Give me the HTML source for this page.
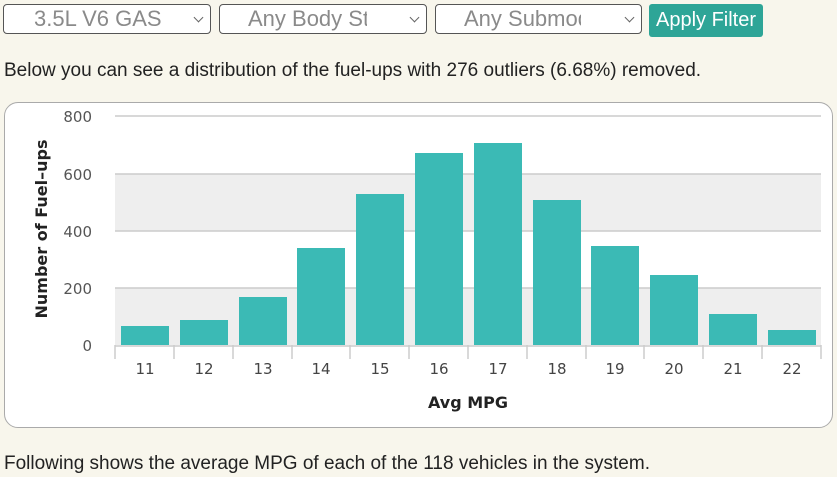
<!DOCTYPE html>
<html><head><meta charset="utf-8"><style>
body{margin:0;background:#f8f6ec;font-family:"Liberation Sans",Arial,sans-serif;width:837px;height:477px;overflow:hidden;position:relative}
.sel{position:absolute;top:4px;height:28px;border:1px solid #555;border-radius:4px;background:#fff;color:#8a8a8a;font-size:22px;line-height:28px;box-sizing:content-box;overflow:hidden}
.sel span{position:absolute;left:28px;top:0;white-space:nowrap}
.sel i{position:absolute;right:8px;top:9px;width:6px;height:6px;border-right:1.5px solid #666;border-bottom:1.5px solid #666;transform:rotate(45deg)}
.btn{position:absolute;left:649px;top:4px;width:114px;height:33px;background:#2ea597;border-radius:3px;color:#fff;font-size:20px;line-height:33px;text-align:center}
p{position:absolute;left:4px;margin:0;font-size:19px;color:#222}
</style></head><body>
<div class="sel" style="left:3px;width:206px"><span style="left:30px">3.5L V6 GAS</span><i></i></div>
<div class="sel" style="left:219px;width:206px"><span>Any Body Sty</span><div style="position:absolute;left:147px;top:0;width:34px;height:28px;background:#fff"></div><i></i></div>
<div class="sel" style="left:435px;width:205px"><span>Any Submode</span><div style="position:absolute;left:145px;top:0;width:34px;height:28px;background:#fff"></div><i></i></div>
<div class="btn">Apply Filter</div>
<p style="top:60px">Below you can see a distribution of the fuel-ups with 276 outliers (6.68%) removed.</p>
<div style="position:absolute;left:4px;top:102px;width:827px;height:324px;border:1px solid #aaa;border-radius:14px;background:#fff"></div>
<svg style="position:absolute;left:0;top:0" width="837" height="477" font-family="'DejaVu Sans',sans-serif">
<rect x="115" y="174" width="706" height="57" fill="#eeeeee"/>
<rect x="115" y="288" width="706" height="57" fill="#eeeeee"/>
<g stroke="#ccc" stroke-width="1.5"><line x1="115" y1="116" x2="821" y2="116"/><line x1="115" y1="174" x2="821" y2="174"/><line x1="115" y1="231" x2="821" y2="231"/><line x1="115" y1="288" x2="821" y2="288"/></g>
<g fill="#555" font-size="15" text-anchor="end"><text x="92" y="122">800</text><text x="92" y="180">600</text><text x="92" y="237">400</text><text x="92" y="294">200</text><text x="92" y="351">0</text></g>
<g fill="#3bbab5">
<rect x="121" y="326" width="48" height="19"/><rect x="180" y="320" width="48" height="25"/><rect x="239" y="297" width="48" height="48"/><rect x="297" y="248" width="48" height="97"/><rect x="356" y="194" width="48" height="151"/><rect x="415" y="153" width="48" height="192"/><rect x="474" y="143" width="48" height="202"/><rect x="533" y="200" width="48" height="145"/><rect x="591" y="246" width="48" height="99"/><rect x="650" y="275" width="48" height="70"/><rect x="709" y="314" width="48" height="31"/><rect x="768" y="330" width="48" height="15"/>
</g>
<g stroke="#ccc" stroke-width="1.5"><line x1="115" y1="346" x2="821" y2="346"/>
<line x1="115" y1="345" x2="115" y2="359"/><line x1="174" y1="345" x2="174" y2="359"/><line x1="233" y1="345" x2="233" y2="359"/><line x1="292" y1="345" x2="292" y2="359"/><line x1="350" y1="345" x2="350" y2="359"/><line x1="409" y1="345" x2="409" y2="359"/><line x1="468" y1="345" x2="468" y2="359"/><line x1="527" y1="345" x2="527" y2="359"/><line x1="586" y1="345" x2="586" y2="359"/><line x1="644" y1="345" x2="644" y2="359"/><line x1="703" y1="345" x2="703" y2="359"/><line x1="762" y1="345" x2="762" y2="359"/><line x1="821" y1="345" x2="821" y2="359"/></g>
<g fill="#444" font-size="15" text-anchor="middle"><text x="145" y="374">11</text><text x="204" y="374">12</text><text x="263" y="374">13</text><text x="321" y="374">14</text><text x="380" y="374">15</text><text x="439" y="374">16</text><text x="498" y="374">17</text><text x="557" y="374">18</text><text x="615" y="374">19</text><text x="674" y="374">20</text><text x="733" y="374">21</text><text x="792" y="374">22</text></g>
<text x="468" y="408" text-anchor="middle" font-size="16" font-weight="bold" fill="#222">Avg MPG</text>
<text transform="translate(47,229) rotate(-90)" text-anchor="middle" font-size="16" font-weight="bold" fill="#222">Number of Fuel–ups</text>
</svg>
<p style="top:453px">Following shows the average MPG of each of the 118 vehicles in the system.</p>
</body></html>
